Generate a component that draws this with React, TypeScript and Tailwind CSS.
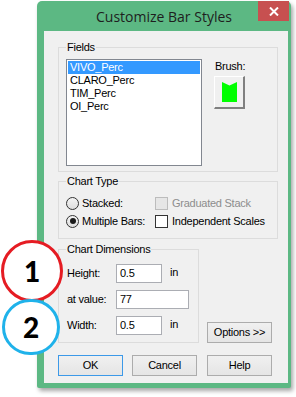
import React from 'react';

const items = ['VIVO_Perc', 'CLARO_Perc', 'TIM_Perc', 'OI_Perc'];

const Radio = ({ checked }: { checked?: boolean }) => (
    <span className="w-[13px] h-[13px] rounded-full border border-[#333] bg-gradient-to-b from-[#f4f4f4] to-[#dedede] flex items-center justify-center shrink-0">
        {checked && <span className="w-[6px] h-[6px] rounded-full bg-[#1a1a1a]" />}
    </span>
);

const Check = ({ disabled }: { disabled?: boolean }) => (
    <span
        className={
            disabled
                ? 'w-[13px] h-[13px] border border-[#bcbcbc] bg-[#e6e6e6] shrink-0'
                : 'w-[13px] h-[13px] border border-[#333] bg-white shrink-0'
        }
    />
);

const Btn = ({ label, def }: { label: string; def?: boolean }) => (
    <button
        className={
            'w-[65px] h-[21px] flex items-center justify-center bg-gradient-to-b from-[#f0f0f0] to-[#e5e5e5] border ' +
            (def ? 'border-[#3c99e8]' : 'border-[#acacac]')
        }
    >
        {label}
    </button>
);

const Field = ({ value, wide }: { value: string; wide?: boolean }) => (
    <div
        className={
            'h-[19px] border border-[#abadb3] bg-white pl-[3px] flex items-center ' +
            (wide ? 'w-[73px]' : 'w-[46px]')
        }
    >
        {value}
    </div>
);

const Annotation = ({ n, color, className }: { n: string; color: string; className: string }) => (
    <div
        className={
            'absolute rounded-full bg-white border-[3px] flex items-center justify-center font-["Lato",sans-serif] font-black text-[28px] text-black ' +
            color +
            ' ' +
            className
        }
    >
        {n}
    </div>
);

export default function App() {
    return (
        <div className="relative w-[296px] h-[397px] bg-white overflow-hidden">
            <div className="ml-[37px] mt-[1px] w-[254px] h-[387px] bg-[#5cb883] rounded-t-[5px] rounded-b-[2px] shadow-[2px_3px_4px_rgba(0,0,0,0.35)] flex flex-col">
                <div className="relative h-[30px] flex items-center justify-center font-['Open_Sans',sans-serif] text-[14px] text-[#1e1e1e]">
                    Customize Bar Styles
                    <button className="absolute right-[2px] top-0 w-[31px] h-[20px] bg-[#c75050] flex items-center justify-center">
                        <svg width="10" height="9" viewBox="0 0 10 9">
                            <path d="M1 0.5 L9 8.5 M9 0.5 L1 8.5" stroke="white" strokeWidth="2" />
                        </svg>
                    </button>
                </div>
                <div className="ml-[7px] mr-[3px] w-[244px] h-[352px] bg-[#f0f0f0] pl-[14px] pt-[10px] font-['Liberation_Sans',Arial,sans-serif] text-[11px] tracking-[-0.25px] text-black leading-[13px]">
                    <fieldset className="w-[220px] border border-[#dcdcdc] pl-[7px] pt-[5px] pb-[5px] flex">
                        <legend className="px-[1px] leading-[13px]">Fields</legend>
                        <div className="w-[136px] h-[107px] border border-[#828790] bg-white p-[1px]">
                            {items.map((it, i) => (
                                <div
                                    key={it}
                                    className={
                                        'h-[13px] pl-[2px] leading-[13px] ' +
                                        (i === 0 ? 'bg-[#3399ff] text-white' : '')
                                    }
                                >
                                    {it}
                                </div>
                            ))}
                        </div>
                        <div className="ml-[12px] flex flex-col pt-[1px]">
                            <span className="ml-[1px]">Brush:</span>
                            <div className="mt-[3px] w-[31px] h-[33px] bg-[#f0f0f0] border-t border-l border-t-white border-l-white border-r-2 border-b-2 border-r-[#808080] border-b-[#808080] flex items-center justify-center">
                                <svg width="15" height="20" viewBox="0 0 15 20">
                                    <polygon points="0,0 7.5,3.5 15,0 15,20 0,20" fill="#00ff00" />
                                </svg>
                            </div>
                        </div>
                    </fieldset>

                    <fieldset className="mt-[3px] w-[220px] border border-[#dcdcdc] pl-[7px] pt-[6px] pb-[8px] flex flex-col">
                        <legend className="px-[1px] leading-[13px]">Chart Type</legend>
                        <div className="h-[18px] flex items-center">
                            <div className="w-[89px] flex items-center gap-[3px]">
                                <Radio />
                                <span>Stacked:</span>
                            </div>
                            <div className="flex items-center gap-[4px] text-[#8d8d8d]">
                                <Check disabled />
                                <span>Graduated Stack</span>
                            </div>
                        </div>
                        <div className="h-[18px] flex items-center">
                            <div className="w-[89px] flex items-center gap-[3px]">
                                <Radio checked />
                                <span>Multiple Bars:</span>
                            </div>
                            <div className="flex items-center gap-[4px]">
                                <Check />
                                <span>Independent Scales</span>
                            </div>
                        </div>
                    </fieldset>

                    <div className="mt-[4px] flex items-end gap-[8px]">
                        <fieldset className="w-[141px] border border-[#dcdcdc] pl-[7px] pt-[8px] pb-[7px] flex flex-col gap-[7px]">
                            <legend className="px-[1px] leading-[13px]">Chart Dimensions</legend>
                            <div className="h-[19px] flex items-center">
                                <span className="w-[50px] pl-[1px]">Height:</span>
                                <Field value="0.5" />
                                <span className="ml-[8px] -mt-[2px]">in</span>
                            </div>
                            <div className="h-[19px] flex items-center">
                                <span className="w-[50px] pl-[1px]">at value:</span>
                                <Field value="77" wide />
                            </div>
                            <div className="h-[19px] flex items-center">
                                <span className="w-[50px] pl-[1px]">Width:</span>
                                <Field value="0.5" />
                                <span className="ml-[8px] -mt-[2px]">in</span>
                            </div>
                        </fieldset>
                        <Btn label="Options >>" />
                    </div>

                    <div className="mt-[12px] flex gap-[9px]">
                        <Btn label="OK" def />
                        <Btn label="Cancel" />
                        <div className="ml-[1px]">
                            <Btn label="Help" />
                        </div>
                    </div>
                </div>
            </div>

            <Annotation n="1" color="border-[#e51c23]" className="left-[1px] top-[240px] w-[62px] h-[62px]" />
            <Annotation n="2" color="border-[#1fb2ea]" className="left-[2px] top-[299px] w-[58px] h-[56px]" />
        </div>
    );
}
